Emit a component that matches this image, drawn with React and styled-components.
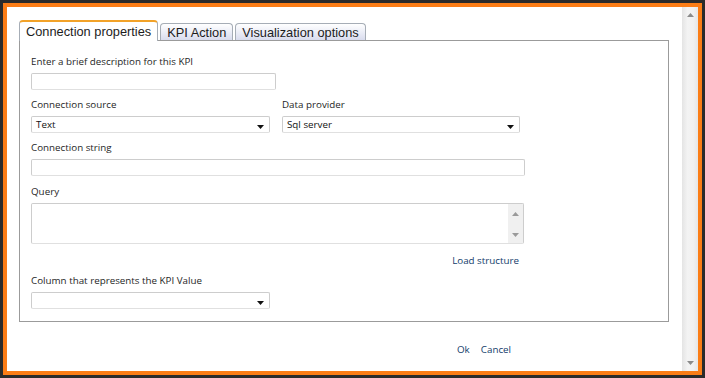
import React from "react";
import styled, { createGlobalStyle } from "styled-components";

const Global = createGlobalStyle`
  html, body {
    margin: 0;
    padding: 0;
    height: 378px;
    overflow: hidden;
    background: #2b2b2b;
  }
  * { box-sizing: border-box; }
`;

const Dialog = styled.div`
  margin: 3px;
  width: 699px;
  height: 372px;
  border: 4px solid #fb7d16;
  background: #fff;
  display: flex;
`;

const Content = styled.div`
  flex: 1;
  padding: 13px 13px 0 12px;
  display: flex;
  flex-direction: column;
`;

const PageScroll = styled.div`
  width: 16px;
  display: flex;
  flex-direction: column;
  justify-content: space-between;
  align-items: center;
  padding: 6px 0;
  background: linear-gradient(to right, #e4e4e4 0%, #f3f3f3 35%, #f1f1f1 70%, #e6e6e6 100%);
`;

const TabBar = styled.div`
  display: flex;
  align-items: flex-end;
  gap: 2px;
  height: 20px;
  position: relative;
  z-index: 1;
`;

const Tab = styled.div`
  font-family: "Liberation Sans", Arial, sans-serif;
  font-size: 12.8px;
  color: #1c1c1c;
  padding: 0 6px;
  display: flex;
  align-items: center;
  border: 1px solid #a6adb6;
  border-bottom: none;
  border-radius: 4px 4px 0 0;
  white-space: nowrap;
  height: ${(p) => (p.$active ? "21px" : "17px")};
  margin-bottom: ${(p) => (p.$active ? "-1px" : "0")};
  border-top: ${(p) => (p.$active ? "2px solid #f2a228" : "1px solid #a6adb6")};
  background: ${(p) =>
    p.$active ? "#fff" : "linear-gradient(to bottom, #ffffff 0%, #eceef7 50%, #d9dcee 100%)"};
`;

const Panel = styled.div`
  border: 1px solid #9b9b9b;
  height: 282px;
  padding: 14px 11px 0 11px;
  display: flex;
  flex-direction: column;
`;

const Group = styled.div`
  display: flex;
  flex-direction: column;
  margin-top: ${(p) => p.$mt || 0}px;
`;

const Row = styled.div`
  display: grid;
  grid-template-columns: 239px 238px;
  column-gap: 12px;
  margin-top: ${(p) => p.$mt || 0}px;
`;

const Label = styled.div`
  font-family: "Open Sans", "Noto Sans", sans-serif;
  font-size: 9.8px;
  line-height: 14px;
  height: 14px;
  color: #1e1e1e;
  margin-bottom: 4px;
  white-space: nowrap;
`;

const Input = styled.div`
  width: ${(p) => p.$w}px;
  height: 17px;
  border: 1px solid #cdcdcd;
  border-bottom-color: #e0e0e0;
  border-radius: 2px;
  background: #fff;
`;

const Select = styled.div`
  width: ${(p) => p.$w}px;
  height: 17px;
  border: 1px solid #cdcdcd;
  border-bottom-color: #e0e0e0;
  border-radius: 2px;
  background: #fff;
  display: flex;
  align-items: center;
  justify-content: space-between;
  padding: 0 5px 0 4px;
  font-family: "Open Sans", "Noto Sans", sans-serif;
  font-size: 9.8px;
  color: #111;
`;

const Caret = styled.svg`
  margin-top: 4px;
  flex-shrink: 0;
`;

const TextArea = styled.div`
  width: 493px;
  height: 41px;
  border: 1px solid #cdcdcd;
  border-bottom-color: #e0e0e0;
  border-radius: 2px;
  background: #fff;
  display: flex;
  justify-content: flex-end;
`;

const MiniScroll = styled.div`
  width: 15px;
  background: #f0f0f0;
  display: flex;
  flex-direction: column;
  justify-content: space-between;
  align-items: center;
  padding: 8px 0 6px;
`;

const LinkRow = styled.div`
  width: 493px;
  display: flex;
  justify-content: flex-end;
  padding-right: 5px;
  margin-top: 10px;
`;

const Link = styled.span`
  font-family: "Open Sans", "Noto Sans", sans-serif;
  font-size: 9.8px;
  line-height: 14px;
  color: #123c6b;
  cursor: pointer;
`;

const Buttons = styled.div`
  display: flex;
  gap: 11px;
  margin-top: 21px;
  margin-left: 438px;
`;

const Arrow = ({ up, color = "#8b8b8b", w = 7, h = 4 }) => (
  <svg width={w} height={h} viewBox={`0 0 ${w} ${h}`}>
    <polygon
      points={up ? `0,${h} ${w},${h} ${w / 2},0` : `0,0 ${w},0 ${w / 2},${h}`}
      fill={color}
    />
  </svg>
);

const SelectBox = ({ w, value }) => (
  <Select $w={w}>
    <span>{value}</span>
    <Caret width="7" height="4" viewBox="0 0 7 4">
      <polygon points="0,0 7,0 3.5,4" fill="#111" />
    </Caret>
  </Select>
);

export default function App() {
  return (
    <>
      <Global />
      <Dialog>
        <Content>
          <TabBar>
            <Tab $active>Connection properties</Tab>
            <Tab>KPI Action</Tab>
            <Tab>Visualization options</Tab>
          </TabBar>
          <Panel>
            <Group>
              <Label>Enter a brief description for this KPI</Label>
              <Input $w={245} />
            </Group>
            <Row $mt={8}>
              <Group>
                <Label>Connection source</Label>
                <SelectBox w={239} value="Text" />
              </Group>
              <Group>
                <Label>Data provider</Label>
                <SelectBox w={238} value="Sql server" />
              </Group>
            </Row>
            <Group $mt={8}>
              <Label>Connection string</Label>
              <Input $w={494} />
            </Group>
            <Group $mt={9}>
              <Label>Query</Label>
              <TextArea>
                <MiniScroll>
                  <Arrow up color="#9a9a9a" />
                  <Arrow color="#9a9a9a" />
                </MiniScroll>
              </TextArea>
            </Group>
            <LinkRow>
              <Link>Load structure</Link>
            </LinkRow>
            <Group $mt={6}>
              <Label>Column that represents the KPI Value</Label>
              <SelectBox w={239} value="" />
            </Group>
          </Panel>
          <Buttons>
            <Link>Ok</Link>
            <Link>Cancel</Link>
          </Buttons>
        </Content>
        <PageScroll>
          <Arrow up />
          <Arrow />
        </PageScroll>
      </Dialog>
    </>
  );
}
